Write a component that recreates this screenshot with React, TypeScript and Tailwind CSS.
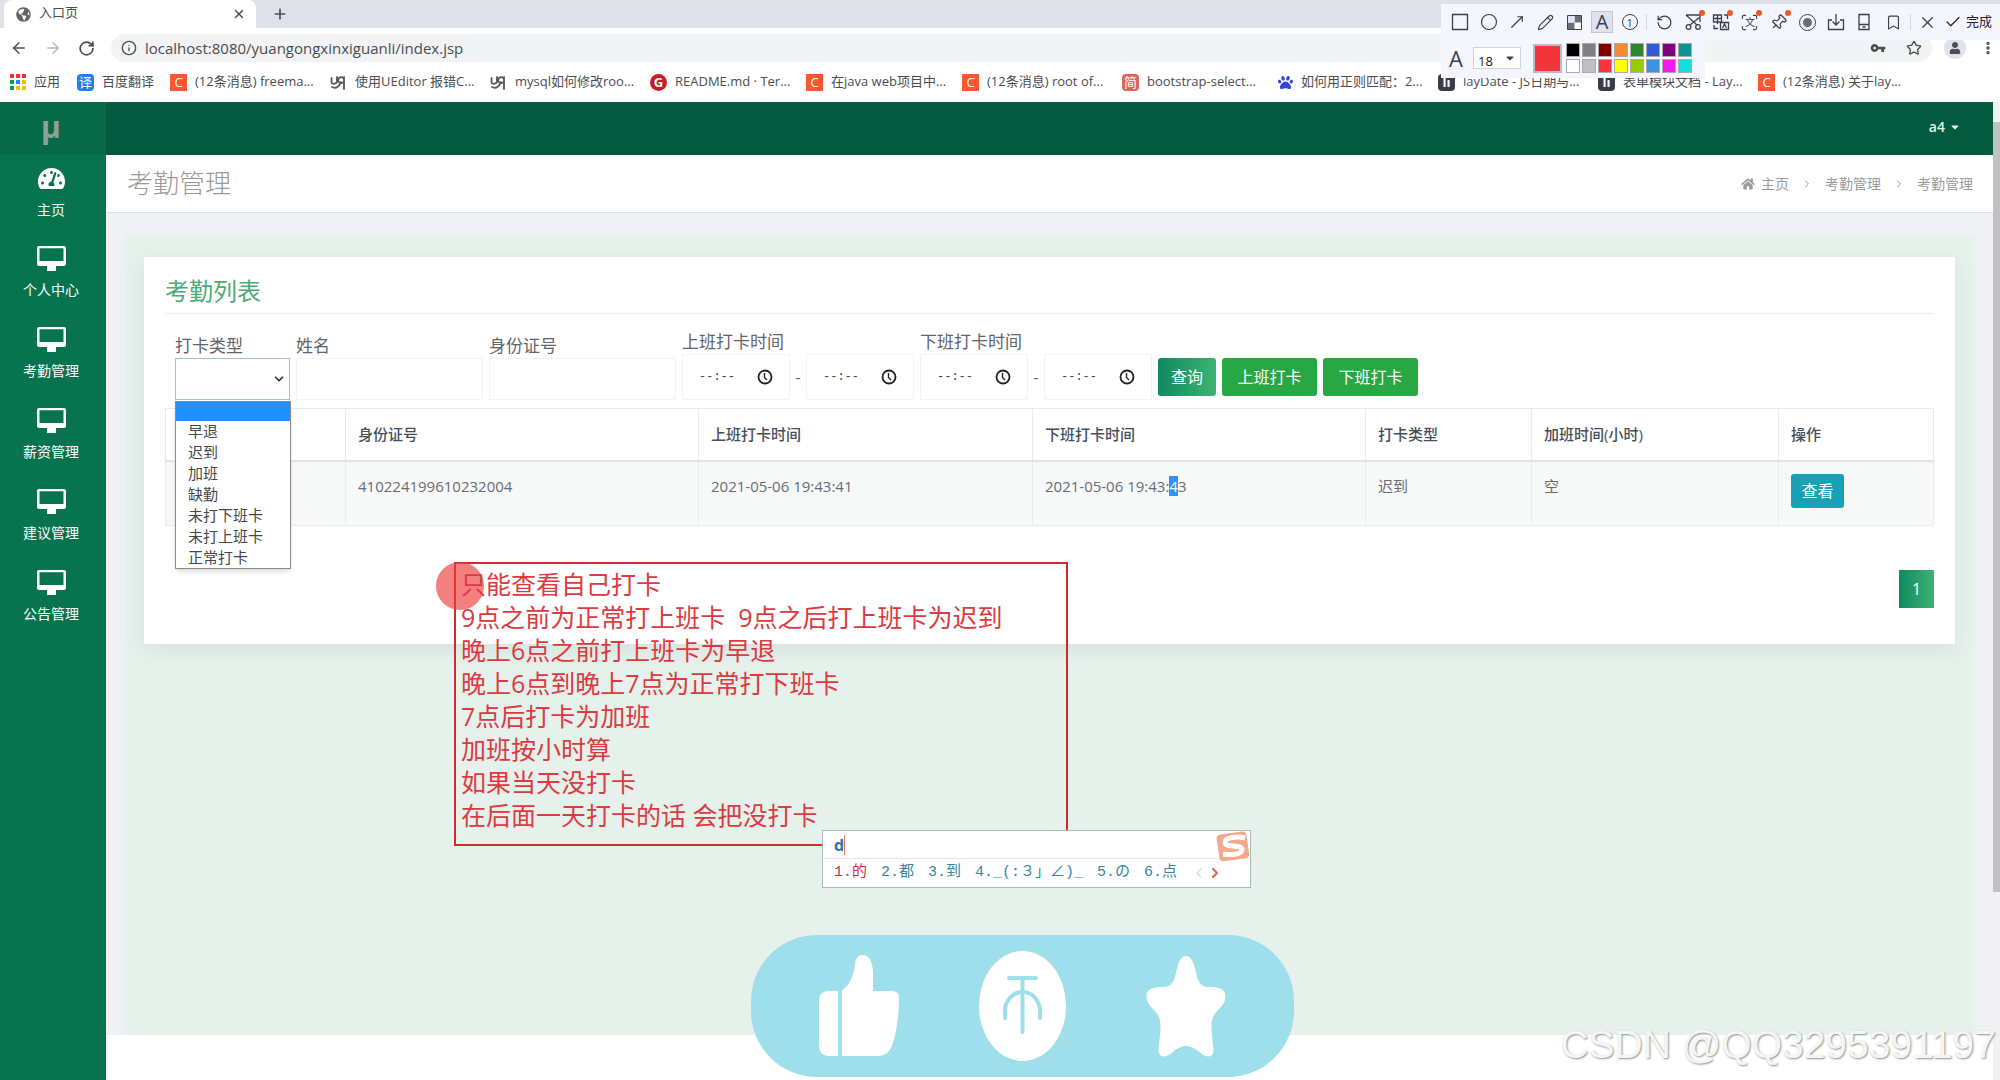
import type { ReactNode } from 'react'
import {
  ArrowLeft, ArrowRight, RotateCw, Info, Plus, X, Star, MoreVertical, Square, Circle, MoveUpRight, Pencil,
  RotateCcw, Scan, Pin, Bookmark, Check, ChevronDown, ChevronLeft, ChevronRight,
} from 'lucide-react'
import { FaGlobeAmericas, FaHome, FaPaw, FaCaretDown, FaTachometerAlt, FaUser } from 'react-icons/fa'
import { MdVpnKey } from 'react-icons/md'

interface BookmarkItem {
  label: string
  icon: ReactNode
  width: string
}

const appColors = ['bg-red-500', 'bg-red-500', 'bg-red-500', 'bg-green-600', 'bg-blue-500', 'bg-amber-400', 'bg-green-600', 'bg-amber-400', 'bg-amber-400']

function Chip({ text, color }: { text: string; color: string }) {
  return <span className={`flex size-[17px] shrink-0 items-center justify-center text-[13px] leading-none text-white ${color}`}>{text}</span>
}

function SnailIcon() {
  return (
    <svg className="size-[17px] shrink-0" viewBox="0 0 17 17" fill="none" stroke="#55585c" strokeWidth="1.8" strokeLinecap="round">
      <path d="M1.500 4v4c0 2.500 4 2.500 5.500 0V3M14 5a3 3 0 1 0-1 3.500M14 3v12M2 13c4 2 7 0 9-5" />
    </svg>
  )
}

const csdn = <Chip text="C" color="bg-[#fc5531]" />
const layui = <Chip text="lı" color="bg-[#393d49] font-bold rounded-sm" />

const bookmarks: BookmarkItem[] = [
  { label: '(12条消息) freema...', icon: csdn, width: 'w-[160px]' },
  { label: '使用UEditor 报错C...', icon: <SnailIcon />, width: 'w-[160px]' },
  { label: 'mysql如何修改roo...', icon: <SnailIcon />, width: 'w-[160px]' },
  { label: 'README.md · Ter...', icon: <Chip text="G" color="bg-[#c71d23] rounded-full font-bold" />, width: 'w-[156px]' },
  { label: '在java web项目中...', icon: csdn, width: 'w-[156px]' },
  { label: '(12条消息) root of...', icon: csdn, width: 'w-[160px]' },
  { label: 'bootstrap-select...', icon: <Chip text="简" color="bg-[#d9665a] rounded-sm" />, width: 'w-[156px]' },
  { label: '如何用正则匹配：2...', icon: <FaPaw className="size-[15px] shrink-0 text-[#3245df]" />, width: 'w-[160px]' },
  { label: 'layDate - JS日期与...', icon: layui, width: 'w-[160px]' },
  { label: '表单模块文档 - Lay...', icon: layui, width: 'w-[160px]' },
  { label: '(12条消息) 关于lay...', icon: csdn, width: 'w-[160px]' },
]

const menu = ['个人中心', '考勤管理', '薪资管理', '建议管理', '公告管理']

const punchTypes = ['早退', '迟到', '加班', '缺勤', '未打下班卡', '未打上班卡', '正常打卡']

const swatches = [
  'bg-black', 'bg-[#808080]', 'bg-[#800000]', 'bg-[#f88933]', 'bg-[#2d882d]', 'bg-[#3559d6]', 'bg-[#800080]', 'bg-[#109393]',
  'bg-white', 'bg-[#c0c0c0]', 'bg-[#f8343c]', 'bg-[#ffff00]', 'bg-[#99cc00]', 'bg-[#3b91e3]', 'bg-[#f218f2]', 'bg-[#16dede]',
]

const notes = [
  '只能查看自己打卡',
  '9点之前为正常打上班卡  9点之后打上班卡为迟到',
  '晚上6点之前打上班卡为早退',
  '晚上6点到晚上7点为正常打下班卡',
  '7点后打卡为加班',
  '加班按小时算',
  '如果当天没打卡',
  '在后面一天打卡的话 会把没打卡',
]

function BrowserChrome() {
  return (
    <header className="shrink-0 bg-white text-[#4a4d51]">
      <div className="flex h-7 bg-[#dee1e6] pl-1">
        <div className="flex h-full w-[252px] items-center gap-2 rounded-t-lg bg-white pr-2.5 pl-3">
          <FaGlobeAmericas className="size-[15px] text-[#5f6368]" />
          <span className="flex-1 pb-1 text-[13px] leading-5">入口页</span>
          <button aria-label="关闭标签"><X className="size-3.5" strokeWidth={2.5} /></button>
        </div>
        <button className="ml-4 self-center" aria-label="新标签"><Plus className="size-4" strokeWidth={2.5} /></button>
      </div>
      <div className="flex h-10 items-center pr-1 pl-2.5">
        <button className="mr-4" aria-label="后退"><ArrowLeft className="size-[18px]" /></button>
        <button className="mr-4 text-[#b5b7ba]" aria-label="前进"><ArrowRight className="size-[18px]" /></button>
        <button className="mr-4" aria-label="刷新"><RotateCw className="size-[17px]" strokeWidth={2.4} /></button>
        <div className="flex h-[28px] flex-1 items-center gap-2 rounded-full bg-[#f1f3f4] px-2.5">
          <Info className="size-4" />
          <input aria-label="地址" className="min-w-0 flex-1 bg-transparent text-[15px] outline-none" defaultValue="localhost:8080/yuangongxinxiguanli/index.jsp" />
          <MdVpnKey className="mr-3 size-4" />
          <Star className="size-4" />
        </div>
        <div className="mr-1.5 ml-3 flex size-[22px] items-center justify-center rounded-full bg-[#dfe1ec]">
          <FaUser className="size-3" />
        </div>
        <button className="ml-2" aria-label="更多"><MoreVertical className="size-4" strokeWidth={3} /></button>
      </div>
      <nav className="flex h-[34px] items-center overflow-hidden pb-1.5 pl-2.5 text-[13px] whitespace-nowrap">
        <a href="#apps" className="flex w-[67px] items-center gap-2">
          <span className="grid w-4 grid-cols-3 gap-[2px]">
            {appColors.map((c, i) => <i key={i} className={`size-[4px] ${c}`} />)}
          </span>
          应用
        </a>
        <a href="#fanyi" className="flex w-[93px] items-center gap-2">
          <Chip text="译" color="bg-[#1e80f0] rounded-sm" />
          百度翻译
        </a>
        {bookmarks.map((b) => (
          <a key={b.label} href="#bookmark" className={`flex shrink-0 items-center gap-2 ${b.width}`}>
            {b.icon}
            {b.label}
          </a>
        ))}
      </nav>
    </header>
  )
}

function Tool({ label, dot, children }: { label: string; dot?: boolean; children: ReactNode }) {
  return (
    <button aria-label={label} className="relative flex size-6 items-center justify-center">
      {children}
      {dot && <i className="absolute top-0 right-0 size-1.5 rounded-full bg-[#ee5a24]" />}
    </button>
  )
}

function Glyph({ children }: { children: ReactNode }) {
  return (
    <svg className="size-[18px]" viewBox="0 0 18 18" fill="none" stroke="#3c3f4e" strokeWidth="1.3">
      {children}
    </svg>
  )
}

// floating capture toolbar, stays above the browser window
function CaptureBar() {
  return (
    <div className="absolute top-1 right-0 w-[559px] text-[#3c3f4e]">
      <div className="flex h-9 items-center justify-between bg-[#f4f5fd] pr-2 pl-[7px]">
        <Tool label="矩形"><Glyph><path d="M1.500 1.500h15v15h-15z" /></Glyph></Tool>
        <Tool label="椭圆"><Circle className="size-[18px]" strokeWidth={1.6} /></Tool>
        <Tool label="箭头"><MoveUpRight className="size-[18px]" strokeWidth={1.6} /></Tool>
        <Tool label="画笔"><Pencil className="size-[17px]" strokeWidth={1.6} /></Tool>
        <Tool label="马赛克">
          <svg className="size-[15px]" viewBox="0 0 15 15">
            <path d="M0.500 0.500h14v14h-14z" fill="#fff" stroke="#3c3f4e" />
            <path d="M7.500 1H14v6.500H7.500zM1 7.500h6.500V14H1z" fill="#6d707c" />
            <path d="M1 1h6.500v6.500H1z" fill="#e4e5ee" />
          </svg>
        </Tool>
        <button aria-label="文字" className="flex size-[22px] items-center justify-center border border-[#c4c6d4] bg-[#dfe1ee] text-[20px] leading-none">A</button>
        <Tool label="序号">
          <span className="flex size-4 items-center justify-center rounded-full border border-[#3c3f4e] text-[11px] leading-none">1</span>
        </Tool>
        <i className="h-4 w-px bg-[#d6d8e2]" />
        <Tool label="撤销"><RotateCcw className="size-[17px]" strokeWidth={1.7} /></Tool>
        <Tool label="裁剪" dot>
          <Glyph>
            <path d="M2 2h14v7M2 2l11 10M16 4L6 12" />
            <circle cx="4.500" cy="14" r="2.300" />
            <circle cx="14" cy="14" r="2.300" />
          </Glyph>
        </Tool>
        <Tool label="翻译" dot>
          <Glyph>
            <path d="M1.500 2h8v7h-8zM1.500 5.500h8M5.500 2v9M8.500 9.500h8v7h-8zM10.500 15l2-4 2 4M12 2h3.500v4M2 12v3.500h4" />
          </Glyph>
        </Tool>
        <Tool label="识别文字" dot>
          <Scan className="size-[19px]" strokeWidth={1.4} />
          <span className="absolute text-[10px] leading-none">文</span>
        </Tool>
        <Tool label="固定" dot><Pin className="size-[17px] rotate-45" strokeWidth={1.7} /></Tool>
        <Tool label="录制">
          <span className="flex size-[17px] items-center justify-center rounded-full border border-[#3c3f4e]"><i className="size-[9px] rounded-full bg-[#6a6c77]" /></span>
        </Tool>
        <Tool label="下载"><Glyph><path d="M9 1v11M5.500 8.500L9 12l3.500-3.500M5 7H1.500v9.500h15V7H13" /></Glyph></Tool>
        <Tool label="手机"><Glyph><path d="M4 1.500h10v15H4zM4 11.500h10M7.500 14h3" /></Glyph></Tool>
        <Tool label="收藏"><Bookmark className="size-[17px]" strokeWidth={1.6} /></Tool>
        <i className="h-4 w-px bg-[#d6d8e2]" />
        <Tool label="取消"><X className="size-[19px]" strokeWidth={1.5} /></Tool>
        <button className="flex items-center gap-1 text-[13px] text-[#1f2130]"><Check className="size-[18px]" strokeWidth={1.6} />完成</button>
      </div>
      <div className="flex h-[38px] w-[264px] items-center bg-[#f4f5fd] pb-0.5 pl-2">
        <span className="w-6 text-[22px] leading-none">A</span>
        <div className="relative h-[22px] w-12 border border-[#d2d4dd] bg-white">
          <select aria-label="字号" className="h-full w-full appearance-none pl-1 text-[13px] leading-5 text-[#222]"><option>18</option></select>
          <FaCaretDown className="pointer-events-none absolute top-1 right-1 size-3" />
        </div>
        <i className="mr-1 ml-3 size-[29px] border-2 border-[#b9bac4] bg-[#f0353b]" />
        <div className="grid grid-cols-8 gap-[2px]">
          {swatches.map((c) => <button key={c} aria-label="颜色" className={`size-3.5 border border-[#a9a9b0] ${c}`} />)}
        </div>
      </div>
    </div>
  )
}

function MonitorIcon() {
  return (
    <svg className="mb-2 h-[26px] w-[29px]" viewBox="0 0 29 26" fill="#fff">
      <path fillRule="evenodd" d="M2 0H27Q29 0 29 2V18Q29 20 27 20H19V25H10V20H2Q0 20 0 18V2Q0 0 2 0ZM2.500 2.300V15H26.500V2.300Z" />
    </svg>
  )
}

function Sidebar() {
  return (
    <aside className="w-[106px] shrink-0 bg-[#08734f] pr-1 text-white">
      <div className="-mr-1 flex h-[53px] items-center justify-center bg-[#066a49] pr-1 pb-1 text-[30px] font-bold text-[#8ca297]">μ</div>
      <ul>
        <li>
          <a href="#home" className="flex h-[81px] flex-col items-center pt-2.5 text-[14px] leading-5">
            <FaTachometerAlt className="mb-2 size-[27px]" />
            主页
          </a>
        </li>
        {menu.map((m) => (
          <li key={m}>
            <a href="#menu" className="flex h-[81px] flex-col items-center pt-2.5 text-[14px] leading-5">
              <MonitorIcon />
              {m}
            </a>
          </li>
        ))}
      </ul>
    </aside>
  )
}

function TimeField({ label }: { label: string }) {
  return (
    <div className="flex h-[46px] w-[108px] items-center justify-between border border-[#f1f4f5] px-4">
      <input aria-label={label} className="w-10 bg-transparent font-['Liberation_Mono',monospace] text-[12px] text-[#44484c] outline-none" defaultValue="--:--" />
      <svg className="size-4" viewBox="0 0 16 16" fill="none" stroke="#222" strokeWidth="1.8">
        <circle cx="8" cy="8" r="6.500" />
        <path d="M7.500 4v4.500L10 11" strokeWidth="1.4" />
      </svg>
    </div>
  )
}

function TimeRange({ label }: { label: string }) {
  return (
    <fieldset>
      <legend className="h-6 text-[17px] leading-6">{label}</legend>
      <div className="flex items-center">
        <TimeField label={`${label} 起`} />
        <span className="w-4 text-center">-</span>
        <TimeField label={`${label} 止`} />
      </div>
    </fieldset>
  )
}

function SearchForm() {
  return (
    <form className="mt-4 flex items-end gap-1.5 pl-2.5 text-[#5f656b]" onSubmit={(e) => e.preventDefault()}>
      <div className="relative">
        <label htmlFor="type" className="block h-6 text-[17px] leading-6">打卡类型</label>
        <select id="type" className="block h-[42px] w-[115px] appearance-none border border-[#9cc3cf] bg-white">
          <option></option>
        </select>
        <ChevronDown className="pointer-events-none absolute right-1 bottom-3.5 size-3.5 text-[#333]" strokeWidth={3} />
        <ul className="absolute top-[67px] left-0 z-10 w-[116px] border border-[#8a8a8a] bg-white text-[15px] leading-[21px] text-[#44484c] shadow-md">
          <li className="h-[19px] bg-[#1e90ff]" />
          {punchTypes.map((t) => <li key={t} className="pl-3">{t}</li>)}
        </ul>
      </div>
      <div>
        <label htmlFor="name" className="block h-6 text-[17px] leading-6">姓名</label>
        <input id="name" className="block h-[42px] w-[187px] border border-[#f1f4f5]" />
      </div>
      <div>
        <label htmlFor="idcard" className="block h-6 text-[17px] leading-6">身份证号</label>
        <input id="idcard" className="block h-[42px] w-[187px] border border-[#f1f4f5]" />
      </div>
      <TimeRange label="上班打卡时间" />
      <TimeRange label="下班打卡时间" />
      <button className="mb-1 h-[38px] w-[58px] rounded-[3px] bg-linear-to-r from-[#0b8a60] to-[#3cb371] text-[16px] text-white">查询</button>
      <button className="mb-1 h-[38px] w-[95px] rounded-[3px] bg-[#28a745] text-[16px] text-white">上班打卡</button>
      <button className="mb-1 h-[38px] w-[95px] rounded-[3px] bg-[#28a745] text-[16px] text-white">下班打卡</button>
    </form>
  )
}

function RecordTable() {
  return (
    <table className="mt-2 w-full table-fixed border-collapse text-left text-[15px] leading-6 text-[#676d73] [&_td]:border [&_td]:border-[#e9ebed] [&_td]:px-3 [&_td]:pt-3 [&_td]:align-top [&_th]:border [&_th]:border-[#e9ebed] [&_th]:px-3">
      <colgroup>
        <col className="w-[180px]" />
        <col className="w-[353px]" />
        <col className="w-[334px]" />
        <col className="w-[333px]" />
        <col className="w-[166px]" />
        <col className="w-[247px]" />
        <col className="w-[155px]" />
      </colgroup>
      <thead>
        <tr className="h-[52px] border-b-2 border-[#e2e5e7] text-[#43505a] [&>th]:font-medium">
          <th></th>
          <th>身份证号</th>
          <th>上班打卡时间</th>
          <th>下班打卡时间</th>
          <th>打卡类型</th>
          <th>加班时间(小时)</th>
          <th>操作</th>
        </tr>
      </thead>
      <tbody>
        <tr className="h-[65px] bg-[#f7f8f8]">
          <td></td>
          <td>410224199610232004</td>
          <td>2021-05-06 19:43:41</td>
          <td>2021-05-06 19:43:<span className="bg-[#3390ff] text-white">4</span>3</td>
          <td>迟到</td>
          <td>空</td>
          <td><button className="h-[34px] w-[53px] rounded-[3px] bg-[#17a2b8] text-[16px] text-white">查看</button></td>
        </tr>
      </tbody>
    </table>
  )
}

function Annotation() {
  return (
    <div className="absolute top-[562px] left-[454px] h-[284px] w-[614px] border-2 border-[#cf2b2e] pt-1 pl-[5px]">
      <i className="absolute -top-0.5 -left-5 size-12 rounded-full bg-[#ee3b3b]/65" />
      <div className="relative text-[25px] leading-[33px] whitespace-pre text-[#db3b40]">
        {notes.map((n) => <p key={n}>{n}</p>)}
      </div>
    </div>
  )
}

function ImeWindow() {
  return (
    <div className="absolute top-[830px] left-[822px] h-[58px] w-[429px] border border-[#a9bdb6] bg-white text-[16px]">
      <div className="flex h-[28px] items-center border-b border-[#e3e6e6] pl-[11px]">
        <span className="border-r border-[#e07a50] leading-5 font-bold text-[#2f6fae]">d</span>
      </div>
      <div className="flex h-[28px] items-center gap-3.5 pl-[11px] font-['Liberation_Mono','Noto_Sans_CJK_SC',monospace] text-[15px] whitespace-nowrap text-[#36869f]">
        <span className="text-[#c8323c]">1.的</span>
        <span>2.都</span>
        <span>3.到</span>
        <span>4._(:３」∠)_</span>
        <span>5.の</span>
        <span>6.点</span>
        <span className="flex items-center">
          <ChevronLeft className="size-4 text-[#d6dbdd]" />
          <ChevronRight className="size-4 text-[#e0663c]" strokeWidth={3} />
        </span>
      </div>
      {/* input method logo */}
      <svg className="absolute top-0 right-0 h-8 w-9" viewBox="0 0 36 32" fill="none">
        <rect x="4" y="2" width="30" height="27" rx="4" fill="#f3a98a" transform="rotate(-8 18 16)" />
        <path d="M31 7C24 5 10 6 11 12C12 17 29 13 28 19C27 24 16 24 9 23" stroke="#fff" strokeWidth="5" />
      </svg>
    </div>
  )
}

function LikeBar() {
  return (
    <div className="absolute top-[935px] left-[751px] flex h-[142px] w-[543px] items-center justify-center gap-20 rounded-[66px] bg-[#9fdfec]">
      <svg className="h-[102px] w-20" viewBox="0 0 80 102" fill="#fff">
        <path d="M19 36V101H9Q0 101 0 90V46Q0 36 9 36Z" />
        <path d="M23 35C32 30 35 18 36 9C37 2 40 0 44 0C50 0 53 6 54 16V36H73Q80 36 80 43C80 62 77 78 74 88Q70 101 59 101H23Z" />
      </svg>
      <svg className="h-[110px] w-[87px]" viewBox="0 0 87 110">
        <ellipse cx="43.500" cy="55" rx="43.500" ry="55" fill="#fff" />
        <path d="M30 27H57M43.500 27V81M26 67V60A17.500 19 0 0 1 61 60V67" fill="none" stroke="#9fdfec" strokeWidth="4" strokeLinecap="round" />
      </svg>
      <svg className="h-[101px] w-20" viewBox="0 0 79 101" fill="#fff">
        <path d="M39.500 0C46 0 48 10 50 19C52 27 55 31 62 31C71 31 79 32 79 40C79 50 71 52 67 60C63 68 66 80 67 94C67 102 60 102 54 97C48 92 44 90 39.500 90C35 90 31 92 25 97C19 102 12 102 12 94C13 80 16 68 12 60C8 52 0 50 0 40C0 32 8 31 17 31C24 31 27 27 29 19C31 10 33 0 39.500 0Z" />
      </svg>
    </div>
  )
}

export default function App() {
  return (
    <div className="relative flex h-screen flex-col overflow-hidden bg-white font-['Open_Sans','Noto_Sans_CJK_SC',sans-serif]">
      <BrowserChrome />
      <div className="flex min-h-0 flex-1">
        <Sidebar />
        <main className="flex min-w-0 flex-1 flex-col">
          <div className="flex h-[53px] shrink-0 items-center justify-end bg-[#055b3f] pr-8">
            <button className="flex items-center gap-1 pb-1 text-[14px] font-semibold text-[#dff5ea]">a4 <FaCaretDown className="size-3" /></button>
          </div>
          <div className="flex h-[58px] shrink-0 items-center justify-between border-b border-[#dcdfe2] pr-5 pl-[21px] text-[#9a9a9a]">
            <h1 className="text-[26px] font-light">考勤管理</h1>
            <nav className="flex items-center gap-3 text-[14px]">
              <a href="#home" className="flex items-center gap-1.5"><FaHome className="size-3.5" />主页</a>
              <ChevronRight className="size-3" />
              <a href="#attendance">考勤管理</a>
              <ChevronRight className="size-3" />
              <span>考勤管理</span>
            </nav>
          </div>
          <div className="flex-1 overflow-hidden bg-[#f0f1f4] px-5 pt-6">
            <div className="h-full bg-[#e6f1ec] px-[18px] pt-5 shadow-[0_0_10px_#e2f2ee]">
              <section className="bg-white px-[21px] pt-4 pb-9 shadow-[0_6px_20px_rgba(0,60,50,0.08)]">
                <h2 className="border-b border-[#eceeef] pb-1 text-[24px] leading-9 text-[#4dab75]">考勤列表</h2>
                <SearchForm />
                <RecordTable />
                <div className="mt-11 flex justify-end">
                  <button className="h-[38px] w-[35px] bg-linear-to-r from-[#0b8a60] to-[#3cb371] text-[16px] text-white">1</button>
                </div>
              </section>
            </div>
          </div>
          <footer className="h-[45px] shrink-0 bg-white" />
        </main>
        <div className="flex w-[7px] shrink-0 flex-col bg-[#f1f1f1] pt-5">
          <div className="h-[770px] bg-[#c1c1c1]" />
        </div>
      </div>
      <CaptureBar />
      <Annotation />
      <ImeWindow />
      <LikeBar />
      <div className="absolute right-1 bottom-2.5 font-['Liberation_Sans',sans-serif] text-[39px] leading-[50px] whitespace-nowrap text-[#f4f6f5] [text-shadow:1px_1px_2px_#8e9391]">CSDN @QQ3295391197</div>
    </div>
  )
}
